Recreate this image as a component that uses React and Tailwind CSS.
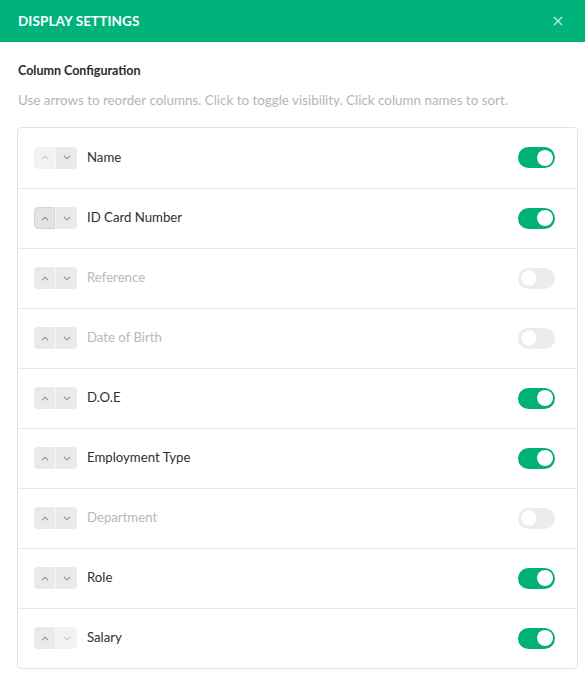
import React from 'react';

const columns = [
  { name: 'Name', on: true, upOff: true },
  { name: 'ID Card Number', on: true, hover: true },
  { name: 'Reference', on: false },
  { name: 'Date of Birth', on: false },
  { name: 'D.O.E', on: true },
  { name: 'Employment Type', on: true },
  { name: 'Department', on: false },
  { name: 'Role', on: true },
  { name: 'Salary', on: true, downOff: true },
];

function Chevron({ up, faded }) {
  return (
    <svg width="8" height="5" viewBox="0 0 8 5" className={faded ? 'text-[#c4c6c9]' : 'text-[#8a8d91]'}>
      <path d={up ? 'M1 4.2 L4 1.2 L7 4.2' : 'M1 0.8 L4 3.8 L7 0.8'} fill="none" stroke="currentColor" strokeWidth="1.1" />
    </svg>
  );
}

function Arrows({ upOff, downOff, hover }) {
  return (
    <div className="flex h-[22px] w-[43px] overflow-hidden rounded-[4px]">
      <div
        className={`flex w-[21px] items-center justify-center ${
          hover ? 'bg-[#e2e3e5] border border-[#d3d4d6] rounded-l-[4px]' : upOff ? 'bg-[#f1f2f3]' : 'bg-[#e8eaec]'
        }`}
      >
        <Chevron up faded={upOff} />
      </div>
      <div className="w-px bg-[#f6f7f8]" />
      <div className={`flex w-[21px] items-center justify-center ${downOff ? 'bg-[#f1f2f3]' : 'bg-[#e8eaec]'}`}>
        <Chevron faded={downOff} />
      </div>
    </div>
  );
}

function Toggle({ on }) {
  return (
    <div className={`flex h-[21px] w-[37px] items-center rounded-full px-[2.5px] ${on ? 'justify-end bg-[#00b077]' : 'justify-start bg-[#ececec]'}`}>
      <div className="h-[16px] w-[16px] rounded-full bg-white shadow-[0_0_1px_rgba(0,0,0,0.15)]" />
    </div>
  );
}

export default function App() {
  return (
    <div className="min-h-screen bg-white font-['Lato','Open_Sans',sans-serif]">
      <div className="flex h-[42px] items-center justify-between bg-[#00b37b] pl-[18px] pr-[22px]">
        <span className="text-[13.5px] font-bold tracking-[0.1px] text-white">DISPLAY SETTINGS</span>
        <svg width="10" height="10" viewBox="0 0 10 10" className="text-white/80">
          <path d="M1 1 L9 9 M9 1 L1 9" stroke="currentColor" strokeWidth="1.1" />
        </svg>
      </div>
      <div className="pl-[17px] pr-[7px] pt-[20px]">
        <div className="pl-px text-[12.5px] font-bold text-[#2b2b2b]">Column Configuration</div>
        <div className="mt-[9px] pl-px text-[13.4px] text-[#b5b5b5]">
          Use arrows to reorder columns. Click to toggle visibility. Click column names to sort.
        </div>
        <div className="mt-[17px] rounded-[4px] border border-[#e4e4e4]">
          {columns.map((c, i) => (
            <div
              key={c.name}
              className={`flex h-[60px] items-center pl-[16px] pr-[22px] ${i > 0 ? 'border-t border-[#e8e8e8]' : ''}`}
            >
              <Arrows upOff={c.upOff} downOff={c.downOff} hover={c.hover} />
              <span className={`ml-[10px] flex-1 text-[13.2px] ${c.on ? 'text-[#2f2f2f]' : 'text-[#b8b8b8]'}`}>{c.name}</span>
              <Toggle on={c.on} />
            </div>
          ))}
        </div>
      </div>
    </div>
  );
}
